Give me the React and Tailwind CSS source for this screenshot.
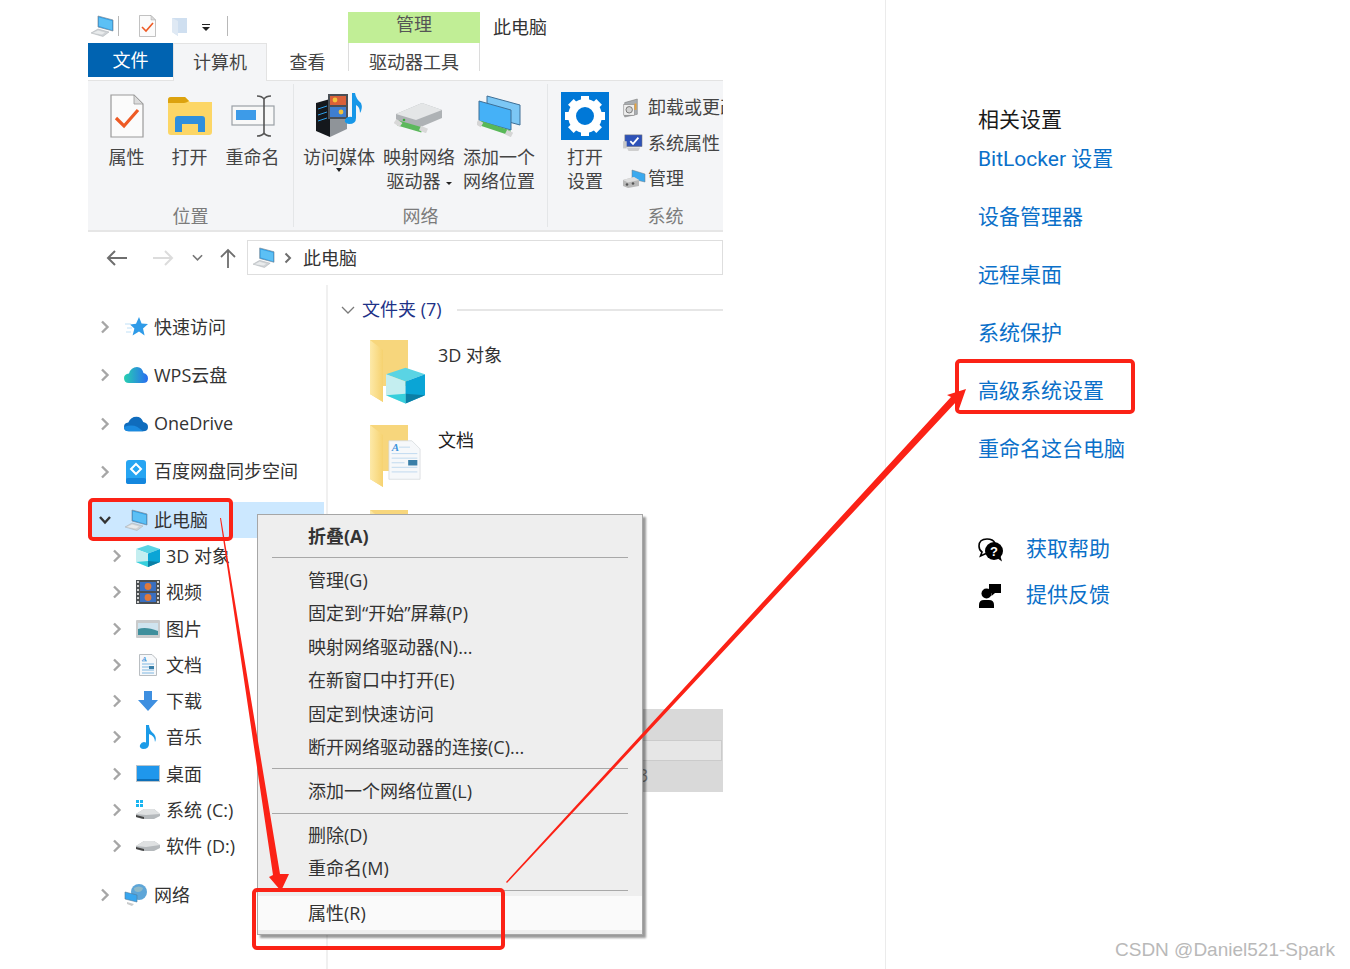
import React from "react";

/* ---------- small drawn icons ---------- */
const PcIcon = ({ className = "w-[24px] h-[22px]" }) => (
  <svg viewBox="0 0 24 22" className={className}>
    <path d="M8 1 L23 5 V16 L8 12 Z" fill="#2f9fe8" stroke="#7b8a96" strokeWidth="0.7" />
    <path d="M9 2.5 L22 6 V15 L9 11 Z" fill="#5cc0f5" />
    <path d="M1 18 L8 14 L19 17 L13 21.5 Z" fill="#cfd3d6" stroke="#a9adb1" strokeWidth="0.5" />
    <path d="M3 18 L8 15.5 L15 17.5 L12 19.5 Z" fill="#e9ebec" />
  </svg>
);

const CheckDoc = ({ className = "w-[34px] h-[44px]" }) => (
  <svg viewBox="0 0 34 44" className={className}>
    <path d="M1 1 H24 L33 10 V43 H1 Z" fill="#fbfbfb" stroke="#9a9a9a" strokeWidth="1.2" />
    <path d="M24 1 V10 H33 Z" fill="#dcdcdc" stroke="#9a9a9a" strokeWidth="0.8" />
    <path d="M6 24 L14 32 L28 16" fill="none" stroke="#ee5a24" strokeWidth="3.2" />
  </svg>
);

const OpenFolder = () => (
  <svg viewBox="0 0 44 38" className="w-[44px] h-[38px]">
    <path d="M0 3 Q0 0 3 0 H17 L22 5 H44 V35 Q44 38 41 38 H3 Q0 38 0 35 Z" fill="#fcd666" />
    <path d="M0 6 V3 Q0 0 3 0 H17 L21 4 Q18 6 16 6 Z" fill="#dca20e" />
    <path d="M7 35 V22 Q7 19 10 19 H34 Q37 19 37 22 V35 H30 V27 H14 V35 Z" fill="#2f8fdc" />
  </svg>
);

const RenameIcon = () => (
  <svg viewBox="0 0 44 42" className="w-[44px] h-[42px]">
    <rect x="1" y="11" width="42" height="19" fill="#f8f8f8" stroke="#9aa0a6" strokeWidth="1.2" />
    <rect x="5" y="15" width="20" height="10" fill="#3d9be8" />
    <path d="M26 1 Q31 1 33 4 Q35 1 40 1 M33 4 V38 M26 41 Q31 41 33 38 Q35 41 40 41" fill="none" stroke="#555" strokeWidth="1.6" />
  </svg>
);

const MediaIcon = () => (
  <svg viewBox="0 0 48 46" className="w-[48px] h-[46px]">
    <path d="M1 10 L15 6 V44 L1 38 Z" fill="#14181c" />
    <path d="M15 6 L32 12 V36 L15 44 Z" fill="#8f9499" />
    <path d="M3 16 L12 13 M3 22 L12 19 M3 28 L12 25" stroke="#2f9fe8" strokeWidth="1" />
    <rect x="13" y="1" width="20" height="25" fill="#4a4f55" />
    <rect x="15" y="3" width="16" height="9" fill="#d9603a" />
    <rect x="15" y="14" width="16" height="10" fill="#3f7ed0" />
    <circle cx="20" cy="7" r="2.4" fill="#f3c23c" />
    <circle cx="26" cy="19" r="2.4" fill="#f3c23c" />
    <path d="M37 0 H40 Q41 6 46 10 Q48 15 45 20 Q45 14 41 12 V25 Q41 31 34 31 Q29 30 30 27 Q32 23 37 24 Z" fill="#1797e8" />
  </svg>
);

const DriveNet = () => (
  <svg viewBox="0 0 50 34" className="w-[50px] h-[34px]">
    <path d="M2 15 L28 4 L48 11 V19 L22 30 L2 23 Z" fill="#aeb2b5" />
    <path d="M2 15 L28 4 L48 11 L22 21 Z" fill="#e4e6e7" />
    <circle cx="10" cy="21" r="1.3" fill="#3aa93a" />
    <path d="M4 24 L28 31" stroke="#5cb85c" strokeWidth="5" />
    <path d="M1 22 L7 26 M26 29 L33 32" stroke="#d8d8d8" strokeWidth="5" />
  </svg>
);

const NetLocation = () => (
  <svg viewBox="0 0 44 42" className="w-[44px] h-[42px]">
    <path d="M10 1 L43 10 V30 L10 21 Z" fill="#7cc7f5" stroke="#3e6f96" strokeWidth="1" />
    <path d="M2 6 L34 15 V35 L2 26 Z" fill="#45b1f7" stroke="#3e6f96" strokeWidth="1" />
    <path d="M3 28 L33 38" stroke="#58b858" strokeWidth="5" />
    <path d="M0 27 L5 30 M29 37 L35 40" stroke="#d5d5d5" strokeWidth="5" />
  </svg>
);

const GearTile = () => (
  <svg viewBox="0 0 48 48" className="w-[48px] h-[48px]">
    <rect width="48" height="48" fill="#0078d7" />
    <circle cx="24" cy="24" r="13" fill="none" stroke="#fff" strokeWidth="8" />
    {[0, 45, 90, 135, 180, 225, 270, 315].map((a) => (
      <rect key={a} x="20" y="4" width="8" height="9" fill="#fff" transform={`rotate(${a} 24 24)`} />
    ))}
  </svg>
);

const UninstallIcon = () => (
  <svg viewBox="0 0 20 22" className="w-[18px] h-[20px]">
    <path d="M3 5 L17 1 V18 L3 21 Z" fill="#a9adb1" stroke="#777" strokeWidth="0.6" />
    <rect x="2" y="7" width="12" height="12" fill="#efefef" stroke="#777" strokeWidth="0.6" />
    <circle cx="8" cy="13" r="3.6" fill="#d2d2d2" stroke="#555" strokeWidth="0.8" />
    <rect x="14" y="6" width="2" height="7" fill="#e8a33c" />
  </svg>
);

const SysPropsIcon = () => (
  <svg viewBox="0 0 24 20" className="w-[22px] h-[18px]">
    <rect x="3" y="1" width="19" height="13" fill="#2e52b8" stroke="#777" strokeWidth="0.6" />
    <path d="M9 8 L12 11 L18 4" fill="none" stroke="#fff" strokeWidth="2" />
    <path d="M1 8 H5 V16 H1 Z" fill="#c8c8c8" />
    <path d="M5 15 H20 L18 19 H7 Z" fill="#cfcfcf" />
  </svg>
);

const ManageIcon = () => (
  <svg viewBox="0 0 24 20" className="w-[24px] h-[20px]">
    <path d="M10 1 L23 5 V13 L10 10 Z" fill="#3ba9ee" stroke="#6b7a86" strokeWidth="0.5" />
    <path d="M1 11 L12 8 L17 11 V17 L6 19 L1 17 Z" fill="#b8b8b8" />
    <path d="M1 11 L12 8 L17 11 L6 13.5 Z" fill="#ddd" />
    <circle cx="5" cy="15.5" r="1.3" fill="#555" />
    <circle cx="11" cy="14.5" r="1.3" fill="#555" />
  </svg>
);

const Chevron = ({ open = false, color = "#a6a6a6" }) => (
  <svg viewBox="0 0 12 14" className="w-[12px] h-[14px]">
    {open ? (
      <path d="M1 4 L6 9.5 L11 4" fill="none" stroke="#333" strokeWidth="2.4" />
    ) : (
      <path d="M3 1.5 L8.5 7 L3 12.5" fill="none" stroke={color} strokeWidth="2.4" />
    )}
  </svg>
);

const Star = () => (
  <svg viewBox="0 0 24 20" className="w-[24px] h-[20px]">
    <path d="M15 0 L17.6 6.4 L24 7 L19 11.4 L20.6 18.4 L15 14.6 L8.6 18.4 L10.4 11.4 L6 7.6 L12 6.8 Z" fill="#2f9be8" />
    <path d="M1 7 H7 M3 11 H8 M2 15 H7" stroke="#bfe0f7" strokeWidth="1" />
  </svg>
);

const WpsCloud = () => (
  <svg viewBox="0 0 24 18" className="w-[24px] h-[18px]">
    <defs>
      <linearGradient id="wps" x1="0" x2="1">
        <stop offset="0" stopColor="#27d0b0" />
        <stop offset="1" stopColor="#2a6cf0" />
      </linearGradient>
    </defs>
    <path d="M5 17 Q0 17 0 12 Q0 8 5 7.5 Q7 1 13 1 Q18 1 19.5 7 Q24 8 24 12.5 Q24 17 19 17 Z" fill="url(#wps)" />
  </svg>
);

const OneDriveCloud = () => (
  <svg viewBox="0 0 25 16" className="w-[25px] h-[16px]">
    <path d="M5 15.5 Q0 15.5 0 11 Q0 7 4.5 6.5 Q7 0.5 13 0.5 Q18 0.5 20 6 Q25 7 25 11 Q25 15.5 20 15.5 Z" fill="#0f6cbd" />
    <path d="M5 15.5 Q0 15.5 0 11 Q8 8 14 11 L20 15.5 Z" fill="#1a8ae0" />
  </svg>
);

const BaiduDisk = () => (
  <svg viewBox="0 0 20 24" className="w-[20px] h-[24px]">
    <rect x="0" y="0" width="20" height="24" rx="3" fill="#27a5f2" />
    <rect x="0" y="18" width="20" height="6" rx="2" fill="#1487de" />
    <path d="M10 4 L15 9 L10 14 L5 9 Z" fill="none" stroke="#fff" strokeWidth="2" />
    <path d="M9 7 L12 10" stroke="#27a5f2" strokeWidth="2.4" />
  </svg>
);

const Cube = ({ className = "w-[24px] h-[22px]" }) => (
  <svg viewBox="0 0 24 22" className={className}>
    <path d="M12 0 L24 4 L12 8.5 L0 4 Z" fill="#5ad4e4" />
    <path d="M0 4 L12 8.5 V22 L0 17 Z" fill="#c4eef0" />
    <path d="M24 4 L12 8.5 V22 L24 17 Z" fill="#0aa5d6" />
    <path d="M12 16 L24 17 L12 22 Z" fill="#0b7fa5" />
    <path d="M12 16 L0 17 L12 22 Z" fill="#36cfdc" />
  </svg>
);

const Film = () => (
  <svg viewBox="0 0 24 24" className="w-[24px] h-[24px]">
    <rect width="24" height="24" fill="#4b4f52" />
    <path d="M2 1 V23 M22 1 V23" stroke="#d0d0d0" strokeWidth="2" strokeDasharray="2 2" />
    <rect x="4" y="2" width="16" height="9" fill="#3a6fc0" />
    <rect x="4" y="13" width="16" height="9" fill="#3a6fc0" />
    <circle cx="12" cy="6.5" r="3.4" fill="#e0793a" />
    <circle cx="12" cy="17.5" r="3.4" fill="#e0793a" />
  </svg>
);

const Picture = () => (
  <svg viewBox="0 0 24 18" className="w-[24px] h-[18px]">
    <rect width="24" height="18" rx="1" fill="#c9cbcc" />
    <rect x="2" y="3" width="20" height="12" fill="#cfe4ef" />
    <path d="M2 9 Q10 6 22 11 V15 H2 Z" fill="#3f8f9c" />
  </svg>
);

const DocPage = () => (
  <svg viewBox="0 0 18 22" className="w-[18px] h-[22px]">
    <path d="M0.5 0.5 H13 L17.5 5 V21.5 H0.5 Z" fill="#f6f8fa" stroke="#b9bec2" />
    <path d="M3 7 H8 M3 10 H15 M3 13 H15 M3 16 H15 M3 19 H15" stroke="#7fb7e2" strokeWidth="1" />
    <text x="3" y="6.5" fontSize="7" fontStyle="italic" fontWeight="700" fill="#3d93dc" fontFamily="Liberation Serif">A</text>
    <rect x="10" y="12" width="5" height="3" fill="#3a7fa8" />
  </svg>
);

const DownArrow = () => (
  <svg viewBox="0 0 20 20" className="w-[20px] h-[20px]">
    <path d="M6 0 H14 V9 H20 L10 20 L0 9 H6 Z" fill="#3e8fe0" />
  </svg>
);

const Note = () => (
  <svg viewBox="0 0 18 24" className="w-[18px] h-[24px]">
    <path d="M7 0 H10 Q10 5 15 9 Q18 13 16 17 Q16 11 10 9 V19 Q10 24 4 24 Q0 23 1 20 Q3 16 7 17.5 Z" fill="#1b9be8" />
  </svg>
);

const Desktop = () => (
  <svg viewBox="0 0 24 17" className="w-[24px] h-[17px]">
    <rect width="24" height="17" fill="#b9c4cc" />
    <rect x="1" y="1" width="22" height="15" fill="#1f97ec" />
    <rect x="1" y="14" width="22" height="2" fill="#0d6fb8" />
  </svg>
);

const SysDrive = () => (
  <svg viewBox="0 0 24 20" className="w-[24px] h-[20px]">
    <path d="M0 0 H3 V3 H0 Z M4 0 H7 V3 H4 Z M0 4 H3 V7 H0 Z M4 4 H7 V7 H4 Z" fill="#19b5f1" />
    <path d="M0 14 L8 9 H18 L24 14 V16 L18 19 H6 L0 17 Z" fill="#b5b9bc" />
    <path d="M0 14 L8 9 H18 L24 14 L10 15 Z" fill="#dfe1e2" />
    <path d="M0 15 L8 17 V19 L0 17 Z" fill="#444" />
  </svg>
);

const PlainDrive = () => (
  <svg viewBox="0 0 24 12" className="w-[24px] h-[12px]">
    <path d="M0 6 L8 1 H18 L24 5 V8 L18 11 H6 L0 9 Z" fill="#b5b9bc" />
    <path d="M0 6 L8 1 H18 L24 5 L10 7 Z" fill="#dfe1e2" />
    <path d="M0 7 L8 9 V11 L0 9 Z" fill="#444" />
  </svg>
);

const Globe = () => (
  <svg viewBox="0 0 24 22" className="w-[24px] h-[22px]">
    <circle cx="15" cy="8" r="8" fill="#5ea6d8" />
    <path d="M10 4 Q15 1 19 4 Q18 8 14 8 Q10 8 10 4 Z" fill="#8fb9c8" />
    <path d="M1 8 L13 11 V18 L1 15 Z" fill="#38a6ef" stroke="#4f7a98" strokeWidth="0.6" />
    <path d="M3 18 L10 20 L8 22 L3 20 Z" fill="#c9cbcc" />
  </svg>
);

const ShellFolder = ({ children }) => (
  <div className="relative w-[56px] h-[66px]">
    <svg viewBox="0 0 38 62" className="w-[38px] h-[62px]">
      <defs>
        <linearGradient id="fld" x1="0" x2="1">
          <stop offset="0" stopColor="#fde9a8" />
          <stop offset="1" stopColor="#f6d270" />
        </linearGradient>
      </defs>
      <path d="M0 0 H38 V46 H13 V62 L0 54 Z" fill="#f7d67c" />
      <path d="M0 0 L13 10 V62 L0 54 Z" fill="url(#fld)" />
    </svg>
    {children}
  </div>
);

const HelpBubbles = () => (
  <svg viewBox="0 0 26 24" className="w-[26px] h-[24px]">
    <path d="M9 1 Q1 1 1 8 Q1 12 4 14 L2.5 18 L8 15.5" fill="#fff" stroke="#000" strokeWidth="1.6" />
    <path d="M9 1 Q15 1 17 5" fill="none" stroke="#000" strokeWidth="1.6" />
    <circle cx="16" cy="13" r="9" fill="#000" />
    <path d="M19 20 L24 23.5 L22 17 Z" fill="#000" />
    <text x="16" y="18" textAnchor="middle" fontSize="13" fontWeight="700" fill="#fff" fontFamily="Liberation Sans">?</text>
  </svg>
);

const FeedbackPerson = () => (
  <svg viewBox="0 0 22 24" className="w-[22px] h-[24px]">
    <circle cx="7.5" cy="9.5" r="5" fill="#000" />
    <path d="M0 24 V21 Q0 16 5 16 H10 Q15 16 15 21 V24 Z" fill="#000" />
    <path d="M10 0 H22 V9 H16 L12.5 12 V9 H10 Z" fill="#000" />
  </svg>
);

/* ---------- ribbon parts ---------- */
const BigButton = ({ w, icon, lines, caret, inlineCaret }) => (
  <div className={`flex flex-col items-center shrink-0 ${w}`}>
    <div className="h-[46px] mt-[12px] flex items-center justify-center">{icon}</div>
    <div className="mt-[6px] text-center leading-[24px] relative whitespace-nowrap">
      {lines.map((l, i) => (
        <div key={l}>
          {l}
          {inlineCaret && i === 1 ? <span className="inline-block ml-[5px] mb-[3px] border-x-[3px] border-t-[3px] border-x-transparent border-t-[#222]" /> : null}
        </div>
      ))}
      {caret ? <span className="absolute left-1/2 -translate-x-1/2 top-[23px] border-x-[3.5px] border-t-[4px] border-x-transparent border-t-[#222]" /> : null}
    </div>
  </div>
);

const GroupLabel = ({ children }) => (
  <div className="text-center text-[#7b7b7b] leading-[24px] -mb-[1px]">{children}</div>
);

const SmallAction = ({ icon, label }) => (
  <div className="flex items-center h-[35.5px] whitespace-nowrap">
    <span className="w-[26px] flex justify-start shrink-0">{icon}</span>
    {label}
  </div>
);

/* ---------- tree ---------- */
const TreeRow = ({ icon, label, child, open, selected, className = "" }) => (
  <div className={`flex items-center ${child ? "pl-[23px]" : "pl-[11px]"} ${selected ? "w-[236px] bg-[#cce8ff]" : ""} ${className}`}>
    <span className="w-[12px] flex shrink-0">
      <Chevron open={open} />
    </span>
    <span className="w-[24px] ml-[13px] flex justify-center shrink-0">{icon}</span>
    <span className={`ml-[6px] whitespace-nowrap text-[#333] leading-[24px] ${child ? "" : "-mt-[1px]"}`}>{label}</span>
  </div>
);

const MenuItem = ({ children, bold, flush }) => (
  <div className={`pl-[50px] flex items-center h-[33.4px] text-[#333] ${bold ? "font-bold" : ""} ${bold || flush ? "" : "pt-[2px]"}`}>{children}</div>
);

const MenuSep = ({ h = "h-[11px]" }) => (
  <div className={`${h} flex items-center pl-[14px] pr-[14px]`}>
    <div className="h-px w-full bg-[#a8a8a8]" />
  </div>
);

const topRows = [
  { icon: <Star />, label: "快速访问" },
  { icon: <WpsCloud />, label: "WPS云盘" },
  { icon: <OneDriveCloud />, label: "OneDrive" },
  { icon: <BaiduDisk />, label: "百度网盘同步空间" },
];

const childRows = [
  { icon: <Cube />, label: "3D 对象" },
  { icon: <Film />, label: "视频" },
  { icon: <Picture />, label: "图片" },
  { icon: <DocPage />, label: "文档" },
  { icon: <DownArrow />, label: "下载" },
  { icon: <Note />, label: "音乐" },
  { icon: <Desktop />, label: "桌面" },
  { icon: <SysDrive />, label: "系统 (C:)" },
  { icon: <PlainDrive />, label: "软件 (D:)" },
];

const relatedLinks = ["BitLocker 设置", "设备管理器", "远程桌面", "系统保护", "高级系统设置", "重命名这台电脑"];

export default function App() {
  return (
    <div className="relative flex w-[1350px] h-[969px] bg-white overflow-hidden text-[18px] text-[#444] font-['Open_Sans','Noto_Sans_CJK_SC',sans-serif]">
      {/* Explorer window */}
      <div className="ml-[88px] w-[635px] shrink-0 flex flex-col">
        {/* quick access toolbar and context tab caption */}
        <div className="h-[43px] flex items-center">
          <div className="flex items-center h-full pt-[8px]">
            <span className="ml-[2px]"><PcIcon className="w-[24px] h-[22px]" /></span>
            <span className="ml-[4px] w-px h-[20px] bg-[#b8b8b8]" />
            <span className="ml-[20px]"><CheckDoc className="w-[17px] h-[22px]" /></span>
            <span className="ml-[16px]">
              <svg viewBox="0 0 15 20" className="w-[15px] h-[20px]"><path d="M0 2 H15 V17 H6 V20 L0 16 Z" fill="#cfdff0" /><path d="M0 2 L6 5 V20 L0 16 Z" fill="#dfe9f4" /></svg>
            </span>
            <span className="ml-[15px] flex flex-col items-center mt-[4px]">
              <span className="w-[8px] h-px bg-[#222] mb-[2px]" />
              <span className="border-x-[4px] border-t-[4px] border-x-transparent border-t-[#222]" />
            </span>
            <span className="ml-[17px] w-px h-[20px] bg-[#b8b8b8]" />
          </div>
          <div className="self-end ml-[120px] w-[132px] h-[31px] bg-[#c1ee96] text-center leading-[25px] text-[#555]">管理</div>
          <div className="ml-[13px] pt-[10px] leading-[24px] text-[#333]">此电脑</div>
        </div>

        {/* ribbon tabs */}
        <div className="h-[38px] flex border-b border-[#e3e3e3] text-[#444]">
          <div className="w-[85px] h-[34px] bg-[#0063b1] text-white text-center leading-[35px]">文件</div>
          <div className="w-[94px] h-[38px] bg-[#f4f5f7] border-x border-t border-[#e3e3e3] text-center leading-[36px]">计算机</div>
          <div className="w-[81px] text-center leading-[38px]">查看</div>
          <div className="w-[132px] h-[28px] border-x border-[#dcdcdc] text-center leading-[39px]">驱动器工具</div>
        </div>

        {/* ribbon body */}
        <div className="h-[151px] flex bg-[#f4f5f7] border-b-2 border-[#e6e6e6] overflow-hidden">
          <div className="w-[206px] shrink-0 flex flex-col justify-between border-r border-[#e4e6e8] my-[3px]">
            <div className="flex pl-[7px] -mt-[3px]">
              <BigButton w="w-[63px]" icon={<CheckDoc />} lines={["属性"]} />
              <BigButton w="w-[63px]" icon={<OpenFolder />} lines={["打开"]} />
              <BigButton w="w-[63px]" icon={<RenameIcon />} lines={["重命名"]} />
            </div>
            <GroupLabel>位置</GroupLabel>
          </div>
          <div className="w-[254px] shrink-0 flex flex-col justify-between border-r border-[#e4e6e8] my-[3px]">
            <div className="flex pl-[5px] -mt-[3px]">
              <BigButton w="w-[80px]" icon={<MediaIcon />} lines={["访问媒体"]} caret />
              <BigButton w="w-[80px]" icon={<DriveNet />} lines={["映射网络", "驱动器"]} inlineCaret />
              <BigButton w="w-[80px]" icon={<NetLocation />} lines={["添加一个", "网络位置"]} />
            </div>
            <GroupLabel>网络</GroupLabel>
          </div>
          <div className="flex-1 min-w-0 flex flex-col justify-between my-[3px]">
            <div className="flex pl-[7px] -mt-[3px]">
              <BigButton w="w-[60px]" icon={<GearTile />} lines={["打开", "设置"]} />
              <div className="ml-[7px] pt-[9px]">
                <SmallAction icon={<UninstallIcon />} label="卸载或更改程序" />
                <SmallAction icon={<SysPropsIcon />} label="系统属性" />
                <SmallAction icon={<ManageIcon />} label="管理" />
              </div>
            </div>
            <div className="pl-[60px]"><GroupLabel>系统</GroupLabel></div>
          </div>
        </div>

        {/* address bar */}
        <div className="h-[53px] flex items-start pt-[8px]">
          <div className="flex items-center h-[36px]">
            <svg viewBox="0 0 22 16" className="ml-[18px] w-[22px] h-[16px]"><path d="M21 8 H2 M9 1 L2 8 L9 15" fill="none" stroke="#6e6e6e" strokeWidth="2" /></svg>
            <svg viewBox="0 0 22 16" className="ml-[24px] w-[22px] h-[16px]"><path d="M1 8 H20 M13 1 L20 8 L13 15" fill="none" stroke="#dcdcdc" strokeWidth="2" /></svg>
            <svg viewBox="0 0 12 8" className="ml-[18px] w-[11px] h-[8px]"><path d="M1 1 L6 6 L11 1" fill="none" stroke="#777" strokeWidth="1.8" /></svg>
            <svg viewBox="0 0 16 20" className="ml-[17px] w-[16px] h-[20px]"><path d="M8 20 V2 M1 9 L8 2 L15 9" fill="none" stroke="#6e6e6e" strokeWidth="1.8" /></svg>
          </div>
          <div className="ml-[11px] flex-1 h-[35px] border border-[#dedede] flex items-center">
            <span className="ml-[4px]"><PcIcon className="w-[23px] h-[21px]" /></span>
            <svg viewBox="0 0 8 12" className="ml-[9px] w-[8px] h-[12px]"><path d="M1.5 1.5 L6 6 L1.5 10.5" fill="none" stroke="#6e6e6e" strokeWidth="2" /></svg>
            <span className="ml-[11px] text-[#333] leading-[24px]">此电脑</span>
          </div>
        </div>

        {/* navigation tree and folder view */}
        <div className="flex-1 min-h-0 flex">
          <div className="w-[240px] shrink-0 border-r-2 border-[#f0f0f0] pt-[18px]">
            {topRows.map((r) => (
              <TreeRow key={r.label} icon={r.icon} label={r.label} className="h-[48.25px]" />
            ))}
            <TreeRow open selected icon={<PcIcon />} label="此电脑" className="h-[36px] mt-[6px]" />
            {childRows.map((r) => (
              <TreeRow key={r.label} child icon={r.icon} label={r.label} className="h-[36.25px]" />
            ))}
            <TreeRow icon={<Globe />} label="网络" className="h-[36px] mt-[13px]" />
          </div>

          <div className="flex-1 min-w-0 pt-[12px]">
            <div className="flex items-center h-[24px] pl-[13px]">
              <svg viewBox="0 0 14 8" className="w-[14px] h-[8px] mt-[2px]"><path d="M1 1 L7 7 L13 1" fill="none" stroke="#7a7a7a" strokeWidth="1.3" /></svg>
              <span className="ml-[7px] text-[#1e3287] whitespace-nowrap leading-[24px]">文件夹 (7)</span>
              <span className="ml-[15px] flex-1 h-[2px] bg-[#e6e6e6] mt-[2px]" />
            </div>
            <div className="mt-[19px] pl-[42px]">
              <div className="h-[85px] flex gap-[12px]">
                <ShellFolder>
                  <span className="absolute left-[16px] top-[27px]"><Cube className="w-[39px] h-[37px]" /></span>
                </ShellFolder>
                <span className="mt-[3px] text-[#333] leading-[24px]">3D 对象</span>
              </div>
              <div className="h-[85px] flex gap-[12px]">
                <ShellFolder>
                  <span className="absolute left-[18px] top-[13px]">
                    <svg viewBox="0 0 18 22" className="w-[33px] h-[44px]">
                      <path d="M0.5 0.5 H13 L17.5 5 V21.5 H0.5 Z" fill="#f6f8fa" stroke="#d5d9dc" strokeWidth="0.4" />
                      <path d="M6 4 H12 M2 7.5 H16 M2 10 H16 M2 12.5 H9 M2 15 H16 M2 17.5 H16" stroke="#bcd8ee" strokeWidth="0.5" />
                      <text x="2" y="6" fontSize="6" fontStyle="italic" fontWeight="700" fill="#3d93dc" fontFamily="Liberation Serif">A</text>
                      <rect x="11" y="11" width="5" height="3" fill="#3a7fa8" />
                    </svg>
                  </span>
                </ShellFolder>
                <span className="mt-[3px] text-[#222] leading-[24px]">文档</span>
              </div>
              <div className="h-[85px]"><ShellFolder /></div>
            </div>
            {/* drive tile partly covered by the context menu */}
            <div className="mt-[114px] ml-auto w-[200px] h-[83px] bg-[#d9d9d9] pt-[31px]">
              <div className="h-[21px] mr-px bg-[#e6e6e6] border border-[#cbcbcb]" />
              <div className="pl-[115px] text-[#7a7a7a] leading-[28px]">3</div>
            </div>
          </div>
        </div>
      </div>

      {/* Settings side column */}
      <div className="ml-[162px] flex-1 border-l border-[#ebebeb] pl-[92px] pt-[108px] font-['Roboto','Noto_Sans_CJK_SC',sans-serif]">
        <div className="h-[23px] leading-[24px] text-[21px] text-[#1a1a1a]">相关设置</div>
        {relatedLinks.map((l) => (
          <div key={l} className="h-[58px] flex items-center text-[21px] text-[#0b70c9]">{l}</div>
        ))}
        <div className="mt-[48px] h-[46px] flex items-center text-[21px] text-[#0b70c9]">
          <span className="w-[48px] flex"><HelpBubbles /></span>获取帮助
        </div>
        <div className="h-[46px] flex items-center text-[21px] text-[#0b70c9]">
          <span className="w-[48px] flex pl-px"><FeedbackPerson /></span>提供反馈
        </div>
      </div>

      {/* Context menu floating over the tree */}
      <div className="absolute left-[257px] top-[514px] w-[386px] h-[421px] bg-[#eeeeee] border border-[#a6a6a6] shadow-[3px_3px_2px_rgba(0,0,0,0.4)] pt-[4.5px]">
        <MenuItem bold>折叠(A)</MenuItem>
        <MenuSep h="h-[10px]" />
        <MenuItem>管理(G)</MenuItem>
        <MenuItem>固定到“开始”屏幕(P)</MenuItem>
        <MenuItem>映射网络驱动器(N)...</MenuItem>
        <MenuItem>在新窗口中打开(E)</MenuItem>
        <MenuItem>固定到快速访问</MenuItem>
        <MenuItem>断开网络驱动器的连接(C)...</MenuItem>
        <MenuSep />
        <MenuItem>添加一个网络位置(L)</MenuItem>
        <MenuSep />
        <MenuItem flush>删除(D)</MenuItem>
        <MenuItem flush>重命名(M)</MenuItem>
        <MenuSep />
        <div className="bg-[#fafafa] h-[34px] pl-[50px] flex items-center text-[#333]">属性(R)</div>
      </div>

      {/* Red callout boxes and arrows */}
      <svg viewBox="0 0 1350 969" className="absolute inset-0 w-[1350px] h-[969px] pointer-events-none">
        <g fill="none" stroke="#fb2216" strokeWidth="4">
          <rect x="90" y="500" width="141" height="39" rx="3" />
          <rect x="254" y="890" width="249" height="58" rx="3" />
          <rect x="957" y="361" width="176" height="51" rx="3" />
        </g>
        <g fill="#fb2216">
          <path d="M220 518 L221 518 L280 874 L289 874 L281 891 L269 877 L273 875 Z" />
          <path d="M506 882 L951 397 L947 395 L966 389 L959 409 L956 402 L507 883 Z" />
        </g>
      </svg>

      {/* Image source stamp */}
      <div className="absolute left-[1115px] top-[938px] text-[19px] leading-[24px] text-[#b9b9b9] font-['Liberation_Sans',sans-serif] whitespace-nowrap">CSDN @Daniel521-Spark</div>
    </div>
  );
}
